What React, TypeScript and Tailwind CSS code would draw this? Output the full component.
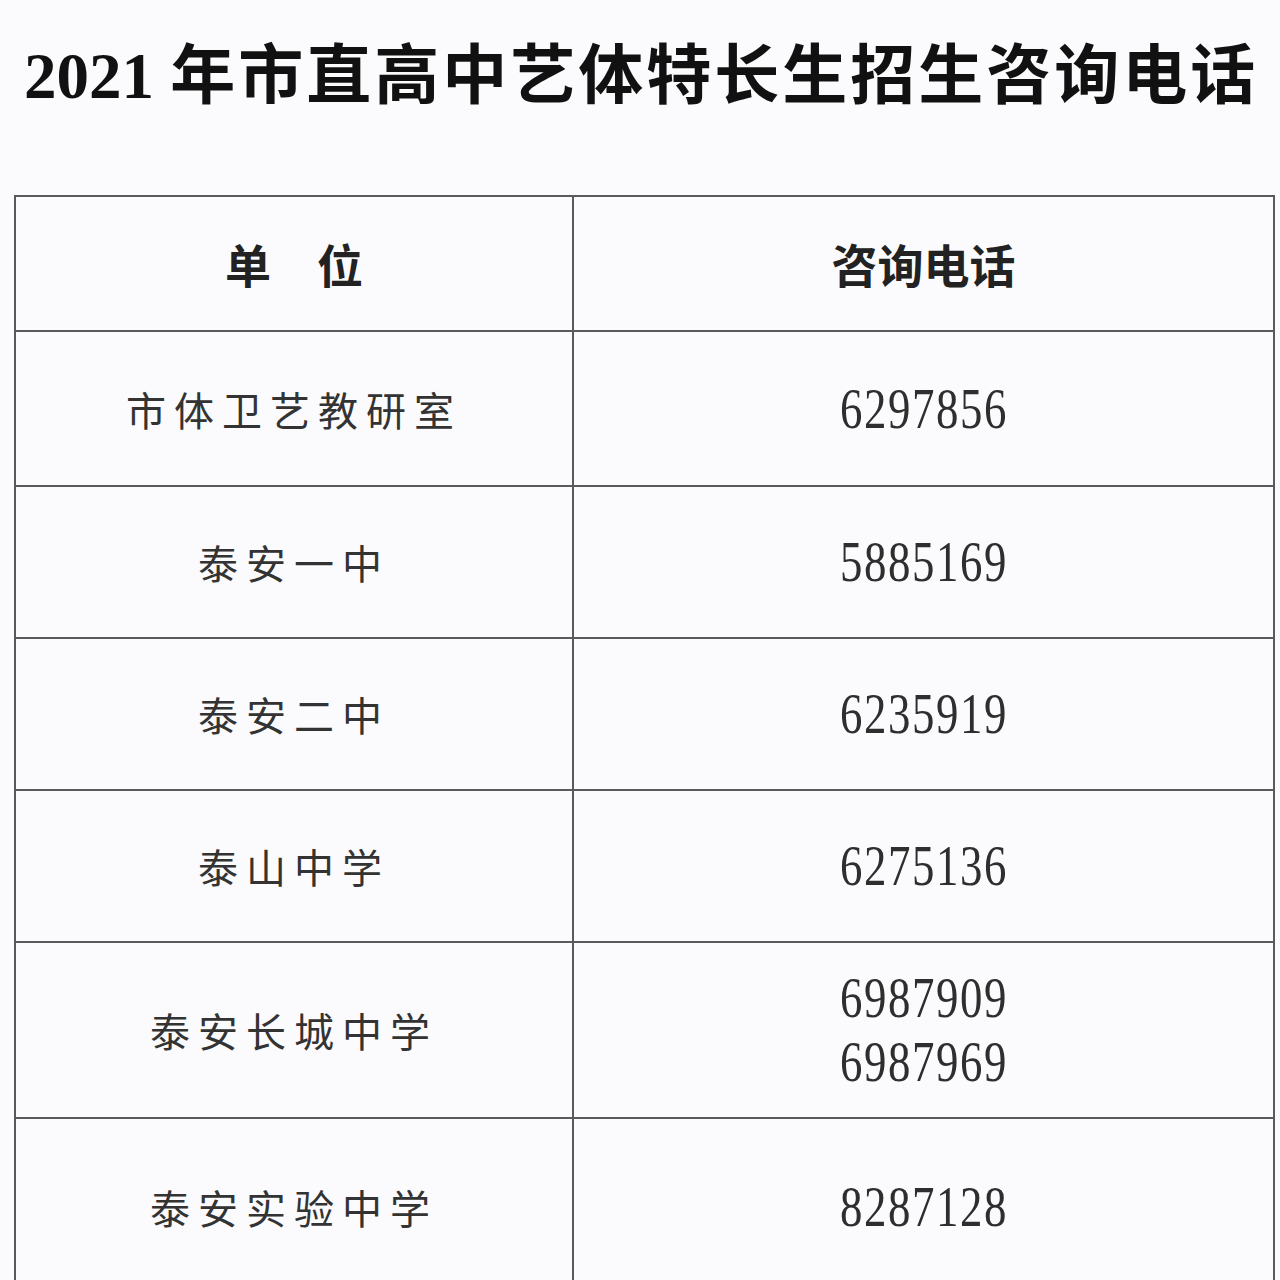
const rows = [
  { name: '市体卫艺教研室', phones: ['6297856'], h: 'h-[155px]' },
  { name: '泰安一中', phones: ['5885169'], h: 'h-[152px]' },
  { name: '泰安二中', phones: ['6235919'], h: 'h-[152px]' },
  { name: '泰山中学', phones: ['6275136'], h: 'h-[152px]' },
  { name: '泰安长城中学', phones: ['6987909', '6987969'], h: 'h-[176px]' },
  { name: '泰安实验中学', phones: ['8287128'], h: 'h-[178px]' },
];

const cjk = "font-['Noto_Sans_CJK_SC',sans-serif]";

export default function App() {
  return (
    <div className="w-[1280px] h-[1280px] overflow-hidden bg-[#fbfbfd]">
      {/* Title */}
      <h1 className="pl-[24px] pt-[38px] h-[195px] text-[65px] leading-none font-bold text-[#111] whitespace-nowrap">
        <span className="font-['Liberation_Serif',serif]">2021 </span>
        <span className={`${cjk} tracking-[3px]`}>年市直高中艺体特长生招生咨询电话</span>
      </h1>

      {/* Table */}
      <table className="ml-[14px] w-[1261px] border-collapse table-fixed">
        <colgroup>
          <col className="w-[558px]" />
          <col />
        </colgroup>
        <thead>
          <tr className="h-[135px]">
            <th className={`border-2 border-[#5a5a5a] text-[46px] font-bold text-[#222] ${cjk}`}>单　位</th>
            <th className={`border-2 border-[#5a5a5a] text-[46px] font-bold text-[#222] ${cjk}`}>咨询电话</th>
          </tr>
        </thead>
        <tbody>
          {rows.map((r) => (
            <tr key={r.name} className={r.h}>
              <td className={`border-2 border-[#5a5a5a] text-center text-[40px] tracking-[8px] text-[#333] ${cjk}`}>
                {r.name}
              </td>
              <td className="border-2 border-[#5a5a5a] text-center">
                <div className="flex flex-col items-center gap-[16px]">
                  {r.phones.map((p) => (
                    <span
                      key={p}
                      className="font-['Liberation_Serif',serif] text-[56px] leading-[48px] tracking-[2px] text-[#2e2e2e] scale-x-[0.8]"
                    >
                      {p}
                    </span>
                  ))}
                </div>
              </td>
            </tr>
          ))}
        </tbody>
      </table>
    </div>
  );
}
